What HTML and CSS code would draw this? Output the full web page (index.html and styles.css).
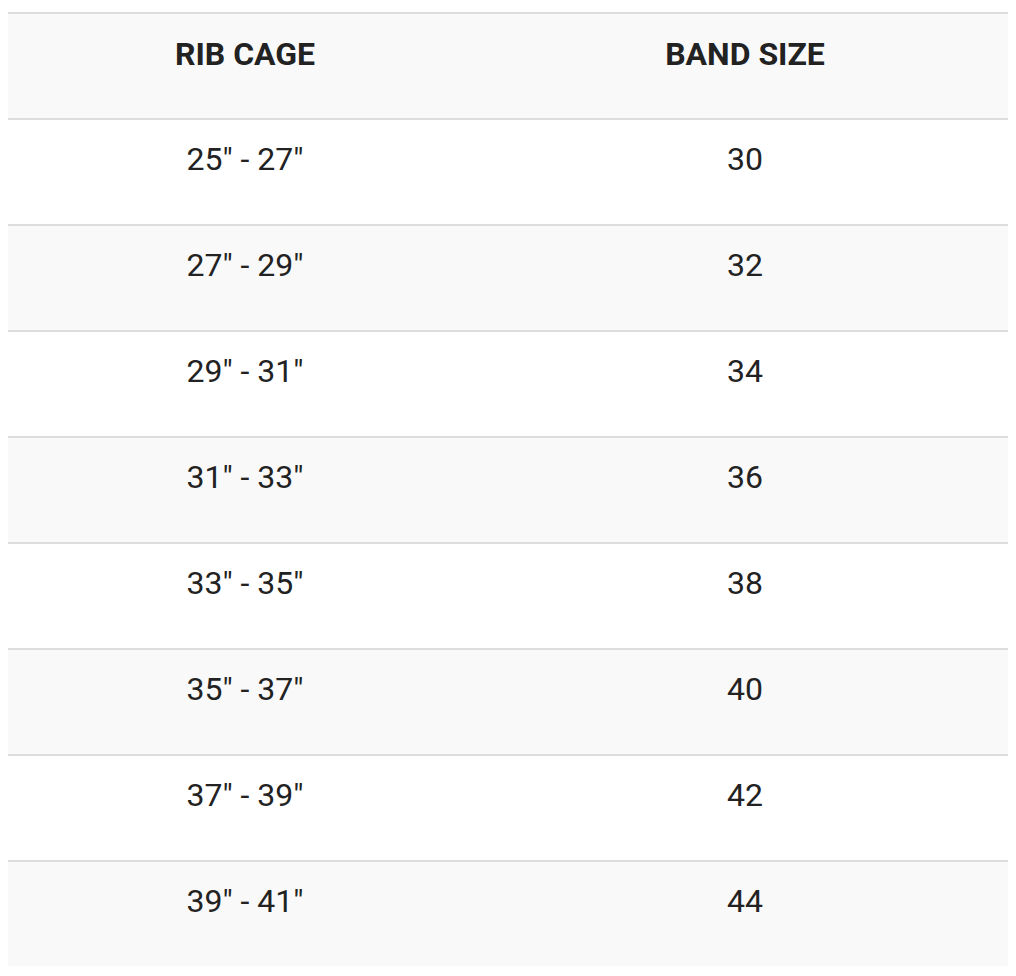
FILE: index.html
```html
<!DOCTYPE html>
<html lang="en">
<head>
<meta charset="utf-8">
<title>Band Size Chart</title>
<link rel="stylesheet" href="styles.css">
</head>
<body>
<table class="size-table">
  <thead>
    <tr class="row head-row">
      <th class="cell"><div class="cell-inner">RIB CAGE</div></th>
      <th class="cell"><div class="cell-inner">BAND SIZE</div></th>
    </tr>
  </thead>
  <tbody>
    <tr class="row"><td class="cell"><div class="cell-inner">25" - 27"</div></td><td class="cell"><div class="cell-inner">30</div></td></tr>
    <tr class="row"><td class="cell"><div class="cell-inner">27" - 29"</div></td><td class="cell"><div class="cell-inner">32</div></td></tr>
    <tr class="row"><td class="cell"><div class="cell-inner">29" - 31"</div></td><td class="cell"><div class="cell-inner">34</div></td></tr>
    <tr class="row"><td class="cell"><div class="cell-inner">31" - 33"</div></td><td class="cell"><div class="cell-inner">36</div></td></tr>
    <tr class="row"><td class="cell"><div class="cell-inner">33" - 35"</div></td><td class="cell"><div class="cell-inner">38</div></td></tr>
    <tr class="row"><td class="cell"><div class="cell-inner">35" - 37"</div></td><td class="cell"><div class="cell-inner">40</div></td></tr>
    <tr class="row"><td class="cell"><div class="cell-inner">37" - 39"</div></td><td class="cell"><div class="cell-inner">42</div></td></tr>
    <tr class="row"><td class="cell"><div class="cell-inner">39" - 41"</div></td><td class="cell"><div class="cell-inner">44</div></td></tr>
  </tbody>
</table>
</body>
</html>
```

FILE: styles.css
```css
html, body {
  background: #ffffff;
}
body {
  margin: 12px 8px 10px 8px;
  font-family: Roboto, "Liberation Sans", Arial, sans-serif;
  color: #222222;
}
.size-table {
  width: 1000px;
  border-collapse: separate;
  border-spacing: 0;
  table-layout: fixed;
}
.row:nth-child(even) .cell,
.head-row .cell {
  background: #f9f9f9;
}
.cell {
  width: 50%;
  padding: 0;
  border-top: 2px solid #dddddd;
  vertical-align: top;
  text-align: center;
  font-size: 32px;
  line-height: 32px;
  font-weight: 400;
}
.cell-inner {
  height: 104px;
  box-sizing: border-box;
  padding: 23px 26px 0 0;
}
.head-row .cell {
  font-weight: 700;
}
.head-row .cell-inner {
  padding-top: 24px;
}
```
